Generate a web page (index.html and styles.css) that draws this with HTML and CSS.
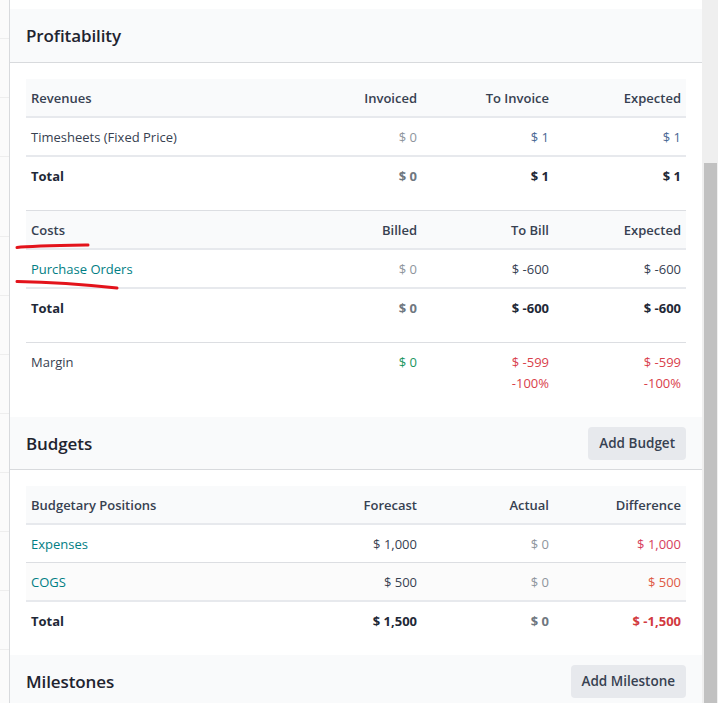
FILE: index.html
```html
<!DOCTYPE html>
<html lang="en">
<head>
<meta charset="utf-8">
<title>Project Profitability</title>
<link rel="stylesheet" href="styles.css">
</head>
<body>
<div class="app">
  <div class="strip">
    <div class="strip-row first"></div>
    <div class="strip-row"></div>
    <div class="strip-row"></div>
    <div class="strip-row tall"></div>
    <div class="strip-row"></div>
    <div class="strip-row"></div>
    <div class="strip-row"></div>
    <div class="strip-row"></div>
    <div class="strip-row"></div>
    <div class="strip-row"></div>
    <div class="strip-row"></div>
  </div>

  <main class="main">
    <section class="panel">
      <header class="panel-head first-head">
        <h2 class="panel-title">Profitability</h2>
      </header>
      <div class="panel-body">
        <table class="ptable">
          <colgroup><col class="c-name"><col class="c-num"><col class="c-num"><col class="c-num"></colgroup>
          <thead>
            <tr><th>Revenues</th><th class="num">Invoiced</th><th class="num">To Invoice</th><th class="num">Expected</th></tr>
          </thead>
          <tbody>
            <tr><td>Timesheets (Fixed Price)</td><td class="num muted">$ 0</td><td class="num blue">$ 1</td><td class="num blue">$ 1</td></tr>
          </tbody>
          <tfoot>
            <tr><td>Total</td><td class="num muted-b">$ 0</td><td class="num">$ 1</td><td class="num">$ 1</td></tr>
          </tfoot>
        </table>

        <table class="ptable topline">
          <colgroup><col class="c-name"><col class="c-num"><col class="c-num"><col class="c-num"></colgroup>
          <thead>
            <tr><th>Costs</th><th class="num">Billed</th><th class="num">To Bill</th><th class="num">Expected</th></tr>
          </thead>
          <tbody>
            <tr><td class="link">Purchase Orders</td><td class="num muted">$ 0</td><td class="num">$ -600</td><td class="num">$ -600</td></tr>
          </tbody>
          <tfoot>
            <tr><td>Total</td><td class="num muted-b">$ 0</td><td class="num">$ -600</td><td class="num">$ -600</td></tr>
          </tfoot>
        </table>

        <table class="ptable margin">
          <colgroup><col class="c-name"><col class="c-num"><col class="c-num"><col class="c-num"></colgroup>
          <tbody>
            <tr>
              <td>Margin</td>
              <td class="num green">$ 0</td>
              <td class="num red"><div>$ -599</div><div>-100%</div></td>
              <td class="num red"><div>$ -599</div><div>-100%</div></td>
            </tr>
          </tbody>
        </table>
      </div>
    </section>

    <section class="panel">
      <header class="panel-head">
        <h2 class="panel-title">Budgets</h2>
        <button class="btn" type="button">Add Budget</button>
      </header>
      <div class="panel-body">
        <table class="ptable">
          <colgroup><col class="c-name"><col class="c-num"><col class="c-num"><col class="c-num"></colgroup>
          <thead>
            <tr><th>Budgetary Positions</th><th class="num">Forecast</th><th class="num">Actual</th><th class="num">Difference</th></tr>
          </thead>
          <tbody>
            <tr><td class="link">Expenses</td><td class="num">$ 1,000</td><td class="num muted">$ 0</td><td class="num pink">$ 1,000</td></tr>
            <tr class="hl"><td class="link">COGS</td><td class="num">$ 500</td><td class="num muted">$ 0</td><td class="num orange">$ 500</td></tr>
          </tbody>
          <tfoot>
            <tr><td>Total</td><td class="num">$ 1,500</td><td class="num muted-b">$ 0</td><td class="num red-b">$ -1,500</td></tr>
          </tfoot>
        </table>
      </div>
    </section>

    <section class="panel">
      <header class="panel-head">
        <h2 class="panel-title">Milestones</h2>
        <button class="btn" type="button">Add Milestone</button>
      </header>
    </section>
  </main>

  <div class="scrollbar"><div class="thumb"></div></div>

  <svg class="annot" width="718" height="703" viewBox="0 0 718 703" aria-hidden="true">
    <path d="M17 247.5 C 30 246, 60 245.5, 88 245" fill="none" stroke="#e3131b" stroke-width="3" stroke-linecap="round"/>
    <path d="M17 281.5 C 45 282, 80 284, 117 288" fill="none" stroke="#e3131b" stroke-width="3" stroke-linecap="round"/>
  </svg>
</div>
</body>
</html>
```

FILE: styles.css
```css
html, body {
  margin: 0;
  padding: 0;
  height: 703px;
  overflow: hidden;
  background: #ffffff;
}

body {
  font-family: "Open Sans", "Noto Sans", "Liberation Sans", sans-serif;
  font-size: 13px;
  color: #374151;
}

.app {
  display: flex;
  height: 703px;
  position: relative;
}

/* left strip of the list behind */
.strip {
  width: 9px;
  flex: 0 0 9px;
  border-right: 1px solid #d8dadd;
  background: #fbfbfb;
  display: flex;
  flex-direction: column;
}

.strip-row {
  height: 58px;
  flex: 0 0 auto;
  border-bottom: 1px solid #eeeeee;
}

.strip-row.first { height: 38px; }
.strip-row.tall { height: 79px; }

/* main area */
.main {
  flex: 1 1 auto;
  padding-top: 9px;
  min-width: 0;
}

.panel-head {
  background: #f9fafb;
  border-bottom: 1px solid #d8dadd;
  height: 53px;
  box-sizing: border-box;
  padding: 0 16px;
  display: flex;
  align-items: center;
  justify-content: space-between;
}

.panel-head.first-head {
  height: 54px;
}

.panel-title {
  margin: 0;
  font-size: 17px;
  font-weight: 600;
  color: #1f2430;
  letter-spacing: -0.1px;
}

.panel-body {
  padding: 16px;
}

.btn {
  font-family: inherit;
  font-size: 13.5px;
  font-weight: 600;
  color: #374151;
  background: #e7e9ed;
  border: 0;
  border-radius: 4px;
  height: 33px;
  padding: 0 11px;
}

/* tables */
.ptable {
  width: 100%;
  table-layout: fixed;
  border-collapse: separate;
  border-spacing: 0;
  margin-bottom: 16px;
}

.ptable:last-child { margin-bottom: 0; }

.c-name { width: 40%; }
.c-num { width: 20%; }

.ptable th,
.ptable td {
  padding: 9px 5px 7px;
  line-height: 21px;
  text-align: left;
  vertical-align: top;
  white-space: nowrap;
}

.ptable th {
  font-weight: 600;
  background: #f9fafb;
  border-bottom: 2px solid #e7e9ed;
  color: #374151;
}

.ptable.topline th {
  border-top: 1px solid #dcdee2;
}

.ptable tbody tr + tr td {
  border-top: 1px solid #dcdee2;
}

.ptable tfoot td {
  border-top: 2px solid #e7e9ed;
  font-weight: 700;
  color: #1f2937;
}

.ptable.margin td {
  border-top: 1px solid #dcdee2;
}

.ptable .num { text-align: right; }

.hl td { background: #fbfbfb; }

.muted { color: #8e959d; }
.ptable tfoot .muted-b { color: #6f7780; }
.blue { color: #4a6894; }
.link { color: #017e84; }
.green { color: #1a9660; }
.red { color: #d9414b; }
.pink { color: #d63d5c; }
.orange { color: #df5a45; }
.ptable tfoot .red-b { color: #d23a3f; }

/* fake scrollbar */
.scrollbar {
  width: 16px;
  flex: 0 0 16px;
  background: #efefef;
  display: flex;
  flex-direction: column;
}

.thumb {
  margin: 163px 1px 0 2px;
  flex: 1 1 auto;
  background: #c1c1c1;
}

/* hand-drawn annotation over the page */
.annot {
  position: absolute;
  left: 0;
  top: 0;
  pointer-events: none;
}
```
